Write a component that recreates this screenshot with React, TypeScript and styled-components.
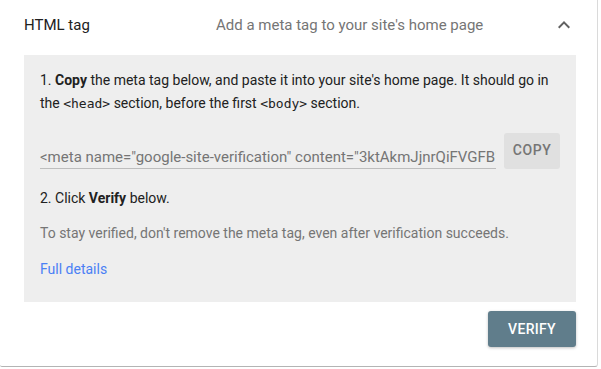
import React from "react";
import styled, { createGlobalStyle } from "styled-components";

const Global = createGlobalStyle`
  html, body { margin: 0; padding: 0; background: #ffffff; }
  body { font-family: Roboto, "Noto Sans", Arial, sans-serif; -webkit-font-smoothing: antialiased; }
`;

const Card = styled.div`
  width: 598px;
  height: 367px;
  box-sizing: border-box;
  background: #fff;
  border-right: 1px solid #dadada;
  border-bottom: 1px solid #b4b4b4;
  border-bottom-right-radius: 3px;
  border-bottom-left-radius: 2px;
  padding: 0 21px 0 24px;
  display: flex;
  flex-direction: column;
`;

const Header = styled.div`
  height: 50px;
  display: flex;
  align-items: center;
  margin-bottom: 5px;
`;

const Title = styled.div`
  width: 192px;
  font-size: 15px;
  color: #212121;
`;

const Description = styled.div`
  flex: 1;
  font-size: 15px;
  color: #757575;
`;

const Chevron = styled.svg`
  width: 24px;
  height: 24px;
  fill: #616161;
`;

const Panel = styled.div`
  background: #eeeeee;
  padding: 14px 16px 14px 16px;
  height: 247px;
  box-sizing: border-box;
  display: flex;
  flex-direction: column;
`;

const Para = styled.p<{ $muted?: boolean }>`
  margin: 0;
  font-size: 14px;
  line-height: 23px;
  color: ${(p) => (p.$muted ? "#757575" : "#212121")};
`;

const Code = styled.code`
  font-family: "DejaVu Sans Mono", "Liberation Mono", monospace;
  font-size: 13px;
`;

const InputRow = styled.div`
  display: flex;
  align-items: center;
  gap: 8px;
  margin: 18px 0 18px;
`;

const MetaInput = styled.div`
  flex: 1;
  min-width: 0;
  height: 34px;
  box-sizing: border-box;
  border-bottom: 1px solid #bdbdbd;
  font-size: 15px;
  color: #757575;
  white-space: nowrap;
  overflow: hidden;
  display: flex;
  align-items: flex-end;
  padding-bottom: 2px;
  margin-top: 2px;
`;

const CopyButton = styled.button`
  width: 56px;
  height: 36px;
  border: none;
  border-radius: 3px;
  background: #e0e0e0;
  color: #757575;
  font-family: Roboto, sans-serif;
  font-size: 14px;
  font-weight: 500;
  letter-spacing: 0.6px;
  padding: 0;
  padding-bottom: 2px;
`;

const Note = styled(Para)`
  margin-top: 12px;
`;

const Link = styled.a`
  margin-top: 13px;
  font-size: 14px;
  line-height: 23px;
  color: #4a80f5;
  text-decoration: none;
`;

const Footer = styled.div`
  display: flex;
  justify-content: flex-end;
  padding-top: 9px;
`;

const VerifyButton = styled.button`
  width: 88px;
  height: 36px;
  border: none;
  border-radius: 3px;
  background: #607d8b;
  color: #fff;
  font-family: Roboto, sans-serif;
  font-size: 14px;
  font-weight: 500;
  letter-spacing: 0.3px;
  box-shadow: 0 1px 3px rgba(0, 0, 0, 0.25);
`;

export default function App() {
  return (
    <>
      <Global />
      <Card>
        <Header>
          <Title>HTML tag</Title>
          <Description>Add a meta tag to your site's home page</Description>
          <Chevron viewBox="0 0 24 24">
            <path d="M12 8l-6 6 1.41 1.41L12 10.83l4.59 4.58L18 14z" />
          </Chevron>
        </Header>
        <Panel>
          <Para>
            1. <b>Copy</b> the meta tag below, and paste it into your site's home page. It should go in
            the <Code>&lt;head&gt;</Code> section, before the first <Code>&lt;body&gt;</Code> section.
          </Para>
          <InputRow>
            <MetaInput>&lt;meta name="google-site-verification" content="3ktAkmJjnrQiFVGFB" /&gt;</MetaInput>
            <CopyButton>COPY</CopyButton>
          </InputRow>
          <Para>
            2. Click <b>Verify</b> below.
          </Para>
          <Note $muted>To stay verified, don't remove the meta tag, even after verification succeeds.</Note>
          <Link href="#">Full details</Link>
        </Panel>
        <Footer>
          <VerifyButton>VERIFY</VerifyButton>
        </Footer>
      </Card>
    </>
  );
}
